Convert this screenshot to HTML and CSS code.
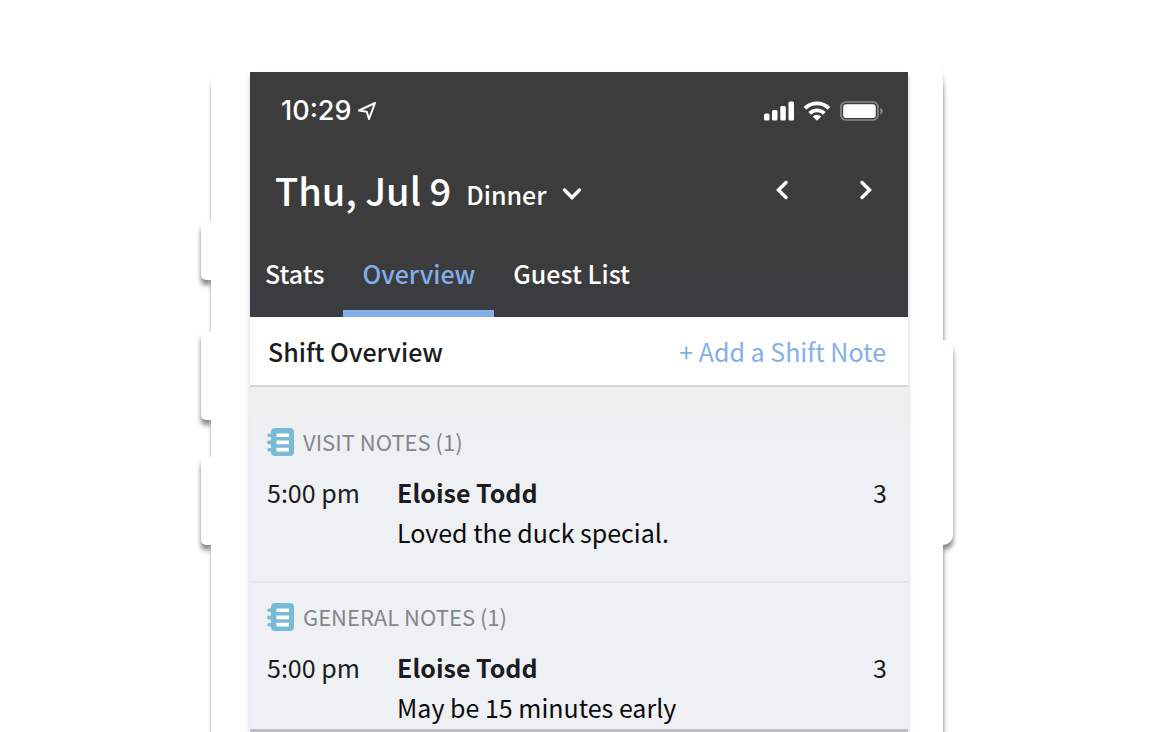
FILE: index.html
```html
<!DOCTYPE html>
<html lang="en">

<head>
    <meta charset="UTF-8">
    <meta name="viewport" content="width=device-width, initial-scale=1">
    <title>Shift Overview</title>
    <link rel="stylesheet" href="styles.css">
</head>

<body>
    <svg class="sprite" aria-hidden="true">
        <symbol id="notebook" viewBox="0 0 28 30">
            <path fill="#79bad6" d="M8 1h15a4 4 0 0 1 4 4v20a4 4 0 0 1-4 4H8a4 4 0 0 1-4-4v-.5H2a1.700 1.700 0 0 1 0-3.500h2v-3.500H2a1.800 1.800 0 0 1 0-4h2V10H2a1.700 1.700 0 0 1 0-3.500h2V5a4 4 0 0 1 4-4z" />
            <path stroke="#fff" stroke-width="3.600" d="M9.500 8.300h12.500M9.500 15.400h12.500M9.500 22.600h12.500" />
        </symbol>
    </svg>

    <div class="phone">
        <span class="side-key left mute"></span>
        <span class="side-key left volume-up"></span>
        <span class="side-key left volume-down"></span>
        <span class="side-key right power"></span>

        <div class="screen">
            <header class="top">
                <div class="status-bar">
                    <div class="clock">
                        <span>10:29</span>
                        <svg width="20" height="20" viewBox="0 0 20 20" aria-hidden="true">
                            <path fill="none" stroke="#fff" stroke-width="2" stroke-linejoin="round" d="M18 2 2 9.500 9.800 10.700 12 18z" />
                        </svg>
                    </div>
                    <div class="signals">
                        <svg width="30" height="20" viewBox="0 0 30 20" aria-hidden="true">
                            <g fill="#fff">
                                <rect x="0" y="12.500" width="5.500" height="7" rx="1.500" />
                                <rect x="8" y="9" width="5.500" height="10.500" rx="1.500" />
                                <rect x="16.300" y="5" width="5.500" height="14.500" rx="1.500" />
                                <rect x="24.500" y="0.500" width="5.500" height="19" rx="1.500" />
                            </g>
                        </svg>
                        <svg width="28" height="20" viewBox="0 0 28 20" aria-hidden="true">
                            <path fill="none" stroke="#fff" stroke-width="3.900" d="M2 7.300a17 17 0 0 1 24 0M6.700 12.400a10.300 10.300 0 0 1 14.600 0" />
                            <path fill="#fff" d="M9.700 15.600a6.200 6.200 0 0 1 8.600 0L14 19.800z" />
                        </svg>
                        <svg width="43" height="20" viewBox="0 0 43 20" aria-hidden="true">
                            <rect x="1" y="1" width="37" height="18" rx="5" fill="none" stroke="#8b8b8b" stroke-width="1.700" />
                            <rect x="3.200" y="3.200" width="32.600" height="13.800" rx="3" fill="#fff" />
                            <path fill="#8b8b8b" d="M40.300 7v6.500c1.500-.6 2.400-1.800 2.400-3.200S41.800 7.600 40.300 7z" />
                        </svg>
                    </div>
                </div>

                <div class="date-bar">
                    <h1>Thu, Jul 9</h1>
                    <div class="shift">
                        <select aria-label="Shift">
                            <option>Dinner</option>
                            <option>Lunch</option>
                        </select>
                        <svg width="20" height="14" viewBox="0 0 20 14" aria-hidden="true">
                            <path fill="none" stroke="#fff" stroke-width="3.500" stroke-linecap="round" d="M2.500 3 10 10.500 17.500 3" />
                        </svg>
                    </div>
                    <div class="pager">
                        <button type="button" aria-label="Previous day">
                            <svg width="14" height="20" viewBox="0 0 14 20" aria-hidden="true">
                                <path fill="none" stroke="#fff" stroke-width="3.500" stroke-linecap="round" d="M11 2.500 3.500 10 11 17.500" />
                            </svg>
                        </button>
                        <button type="button" aria-label="Next day">
                            <svg width="14" height="20" viewBox="0 0 14 20" aria-hidden="true">
                                <path fill="none" stroke="#fff" stroke-width="3.500" stroke-linecap="round" d="M3 2.500 10.500 10 3 17.500" />
                            </svg>
                        </button>
                    </div>
                </div>

                <nav class="tabs">
                    <a href="#stats">Stats</a>
                    <a href="#overview" class="active">Overview</a>
                    <a href="#guests">Guest List</a>
                </nav>
            </header>

            <div class="section-title">
                <h2>Shift Overview</h2>
                <button type="button" class="add-note">+ Add a Shift Note</button>
            </div>

            <main class="notes">
                <section class="note-group">
                    <h3><svg width="28" height="30"><use href="#notebook" /></svg>VISIT NOTES (1)</h3>
                    <div class="note">
                        <span class="time">5:00 pm</span>
                        <div class="guest">
                            <strong>Eloise Todd</strong>
                            <p>Loved the duck special.</p>
                        </div>
                        <span class="covers">3</span>
                    </div>
                </section>
                <section class="note-group">
                    <h3><svg width="28" height="30"><use href="#notebook" /></svg>GENERAL NOTES (1)</h3>
                    <div class="note">
                        <span class="time">5:00 pm</span>
                        <div class="guest">
                            <strong>Eloise Todd</strong>
                            <p>May be 15 minutes early</p>
                        </div>
                        <span class="covers">3</span>
                    </div>
                </section>
            </main>
        </div>
    </div>
</body>

</html>
```
FILE: styles.css
```css
* {
    box-sizing: border-box;
}

body {
    display: flex;
    flex-direction: column;
    align-items: center;
    min-height: 100vh;
    margin: 0;
    padding-top: 40px;
    background-color: #fff;
    color: #1b1c20;
    font-family: "Noto Sans CJK JP", "Open Sans", sans-serif;
    font-size: 25px;
    line-height: 40px;
}

h1,
h2,
h3,
p {
    margin: 0;
}

button,
select {
    padding: 0;
    border: none;
    background: none;
    color: inherit;
    font: inherit;
    cursor: pointer;
}

svg {
    display: block;
    flex-shrink: 0;
}

.sprite {
    position: absolute;
    width: 0;
    height: 0;
}

/* phone shell */
.phone {
    position: relative;
    flex: 1;
    width: 100%;
    max-width: 732px;
    padding: 32px 35px 0 39px;
    background-color: #fff;
    border-radius: 40px 40px 0 0;
    box-shadow: 1px 10px 4px rgba(0, 0, 0, 0.32), 0 14px 2px 1px rgba(0, 0, 0, 0.1);
}

.side-key {
    position: absolute;
    width: 10px;
    background-color: #fff;
    box-shadow: 0 5px 5px rgba(0, 0, 0, 0.5);
}

.left {
    right: 100%;
    border-radius: 5px 0 0 5px;
    clip-path: inset(0 0 -20px -20px);
}

.right {
    left: 100%;
    border-radius: 0 10px 10px 0;
    clip-path: inset(0 -20px -20px 0);
}

.mute {
    top: 182px;
    height: 58px;
}

.volume-up {
    top: 292px;
    height: 88px;
}

.volume-down {
    top: 417px;
    height: 88px;
}

.power {
    top: 300px;
    height: 205px;
}

.screen {
    border-bottom: 4px solid #bfbfc3;
    box-shadow: 0 4px 5px rgba(0, 0, 0, 0.2);
}

/* dark header */
.top {
    background: linear-gradient(#3c3c3c 75%, #3a3c41);
    color: #fff;
}

.status-bar {
    display: flex;
    justify-content: space-between;
    align-items: center;
    height: 77px;
    padding: 0 25px 0 31px;
}

.clock {
    display: flex;
    align-items: center;
    gap: 6px;
    font-family: Inter, sans-serif;
    font-size: 27px;
    font-weight: 500;
}

.signals {
    display: flex;
    gap: 9px;
}

.date-bar {
    display: flex;
    align-items: center;
    height: 82px;
    padding: 0 35px 0 25px;
}

.date-bar h1 {
    font-size: 38px;
    font-weight: 500;
}

.shift {
    display: flex;
    align-items: center;
    gap: 15px;
    margin-left: 15px;
    padding-top: 8px;
}

.shift select {
    appearance: none;
    font-weight: 500;
}

.shift option {
    color: #1b1c20;
}

.pager {
    display: flex;
    gap: 70px;
    margin-left: auto;
}

.tabs {
    display: flex;
    height: 86px;
}

.tabs a {
    padding: 22px 19px 0;
    border-bottom: 7px solid transparent;
    color: #fff;
    font-weight: 500;
    text-decoration: none;
}

.tabs a:first-child {
    padding-left: 15px;
}

.tabs .active {
    border-bottom-color: #83aeea;
    color: #83aeea;
}

/* overview list */
.section-title {
    display: flex;
    justify-content: space-between;
    align-items: center;
    height: 70px;
    padding: 0 22px 0 18px;
    border-bottom: 2px solid #d5d5d5;
    background-color: #fff;
}

.section-title h2 {
    font-size: 25px;
    font-weight: 500;
}

.add-note {
    color: #83b0ea;
}

.notes {
    padding: 20px 0 2px;
    background: linear-gradient(#efefef 20px, #eff0f4 60px);
}

.note-group {
    padding: 14px 21px 0 17px;
}

.note-group + .note-group {
    margin-top: 29px;
    border-top: 2px solid #e6e7eb;
    padding-top: 13px;
}

.note-group h3 {
    display: flex;
    align-items: center;
    gap: 8px;
    color: #85868b;
    font-size: 22px;
    font-weight: 400;
}

.note-group h3 svg {
    margin-top: 2px;
}

.note {
    display: flex;
    padding-top: 11px;
}

.time {
    width: 130px;
}

.guest {
    flex: 1;
}

.guest strong {
    display: block;
    font-weight: 600;
}

.guest p {
    color: #0b0b0d;
}
```
